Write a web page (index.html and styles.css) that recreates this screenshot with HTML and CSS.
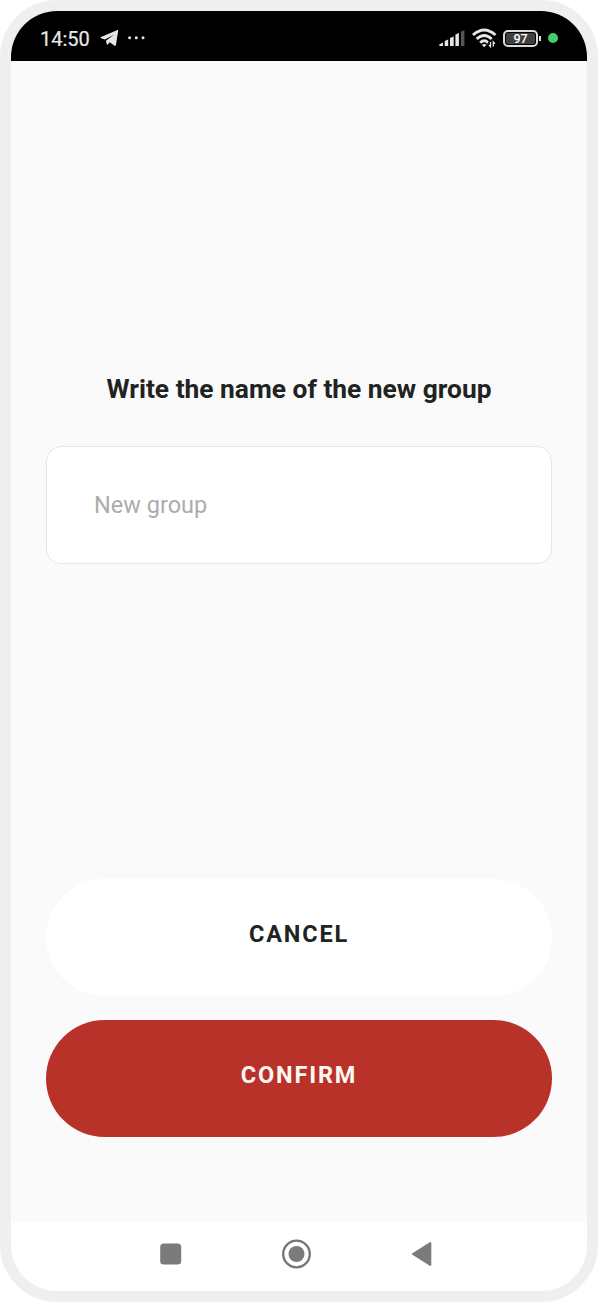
FILE: index.html
```html
<!DOCTYPE html>
<html lang="en">
<head>
<meta charset="utf-8">
<title>New group</title>
<link rel="stylesheet" href="styles.css">
</head>
<body>
<div class="phone">
  <header class="status">
    <span class="time">14:50</span>
    <svg class="telegram" width="19" height="17" viewBox="0 0 19 17"><path fill="#e6e6e6" d="M18.200.5 16 14.600c-.2 1.200-.9 1.600-1.800 1L9.800 12.300 8 14.300c-.6.600-1.100.4-1.300-.4L6 10.700 14 4.600 5 9.600 1.100 8.300C.2 7.900.2 7.300 1.100 6.900L16.900.2c.8-.3 1.400-.2 1.300.3z"/></svg>
    <svg class="dots" width="17" height="4" viewBox="0 0 17 4" fill="#e6e6e6"><circle cx="1.600" cy="1.700" r="1.500"/><circle cx="8.300" cy="1.700" r="1.500"/><circle cx="15" cy="1.700" r="1.500"/></svg>
    <span class="spacer"></span>
    <svg class="signal" width="26" height="17" viewBox="0 0 26 17" fill="#e6e6e6"><path d="M.3 16v-1.600L4 12.600V16zM5.700 10.900l3.500-1.300V16H5.700zM11 8l3.700-1.400V16H11zM16.400 4.600l3.500-1.500V16h-3.500z"/><path fill="#555" d="m22 1.500 3.400-1.200V16H22z"/></svg>
    <svg class="wifi" width="25" height="20" viewBox="0 0 25 20"><g fill="none" stroke="#e6e6e6" stroke-width="2.900"><path d="M1 7Q12.200-3.200 23.400 7M4.700 11Q12.200 4.200 19.700 11M8.200 14.700Q12.200 10.900 16.200 14.700"/></g><path fill="#e6e6e6" d="M9.800 16.800q2.400-1.800 4.800 0L12.200 19.200z"/><path fill="#000" d="m16 14 2.500-1.500H25V20h-9z"/><path d="M18.500 14v4.600L17 17M21.300 18.600V14l1.600 1.700" fill="none" stroke="#e6e6e6" stroke-width="1.300"/></svg>
    <span class="battery"><span class="level">97</span></span><span class="tip"></span>
    <span class="live"></span>
  </header>
  <main class="screen">
    <h1 class="title">Write the name of the new group</h1>
    <input class="field" type="text" placeholder="New group" aria-label="New group">
    <div class="actions">
      <button class="button">CANCEL</button>
      <button class="button confirm">CONFIRM</button>
    </div>
  </main>
  <nav class="nav">
    <svg width="22" height="22" viewBox="0 0 22 22"><rect x=".2" y=".5" width="21" height="21" rx="3.500" fill="#7b7b7b"/></svg>
    <svg width="30" height="30" viewBox="0 0 30 30"><circle cx="14.500" cy="15" r="13.300" fill="none" stroke="#757575" stroke-width="2.300"/><circle cx="14.500" cy="15" r="8" fill="#7b7b7b"/></svg>
    <svg width="21" height="26" viewBox="0 0 21 26"><path d="M19.300 2v22L2 13z" fill="#7b7b7b" stroke="#7b7b7b" stroke-width="2" stroke-linejoin="round"/></svg>
  </nav>
</div>
</body>
</html>
```
FILE: styles.css
```css
* { box-sizing: border-box; }
body { margin: 0; background: #fff; font-family: Roboto, sans-serif; }
.phone {
  width: 598px;
  height: 1302px;
  border: 11px solid #efefef;
  border-radius: 57px;
  overflow: hidden;
  display: flex;
  flex-direction: column;
  background: #fff;
}
.status {
  height: 50px;
  flex: none;
  display: flex;
  align-items: center;
  padding: 4px 29px 0;
  background: #000;
}
.time { width: 60px; padding-top: 1px; font-size: 20px; line-height: 24px; color: #e8e8e8; -webkit-text-stroke: 0.2px #e8e8e8; }
.dots { margin-left: 9px; }
.spacer { flex: 1; }
.wifi { margin-left: 7px; }
.battery {
  width: 35px;
  height: 17px;
  margin-left: 6px;
  padding: 1px;
  border: 2px solid #dcdcdc;
  border-radius: 5px;
  display: flex;
}
.level {
  flex: 1;
  display: flex;
  align-items: center;
  justify-content: center;
  border-radius: 2px;
  background: #404040;
  color: #fff;
  font-size: 12.500px;
  font-weight: 500;
  line-height: 11px;
}
.tip { width: 2px; height: 5px; margin-left: 1px; background: #e0e0e0; }
.live { width: 10px; height: 10px; margin-left: 7px; border-radius: 50%; background: #41cf6c; }
.screen {
  flex: 1;
  display: flex;
  flex-direction: column;
  padding: 312px 35px 85px;
  background: #fafafa;
}
.title { margin: 0; font-size: 26.350px; line-height: 32px; font-weight: 700; text-align: center; color: #212322; white-space: nowrap; }
.field {
  width: 100%;
  height: 118px;
  margin-top: 41px;
  padding: 0 47px;
  border: 1px solid #e6e6e6;
  border-radius: 15px;
  background: #fff;
  font: 400 23.500px Roboto, sans-serif;
  outline: none;
}
.field::placeholder { color: #acacac; opacity: 1; }
.actions { margin-top: auto; display: flex; flex-direction: column; gap: 24px; }
.button {
  height: 117px;
  padding: 0 0 8px;
  border: 0;
  border-radius: 59px;
  background: #fff;
  color: #212322;
  font: 700 23.500px Roboto, sans-serif;
  letter-spacing: 1.850px;
}
.confirm { background: #b8322a; color: #fff8f2; }
.nav {
  height: 69px;
  flex: none;
  display: flex;
  align-items: center;
  padding: 0 155px 5px 149px;
  justify-content: space-between;
}
```
